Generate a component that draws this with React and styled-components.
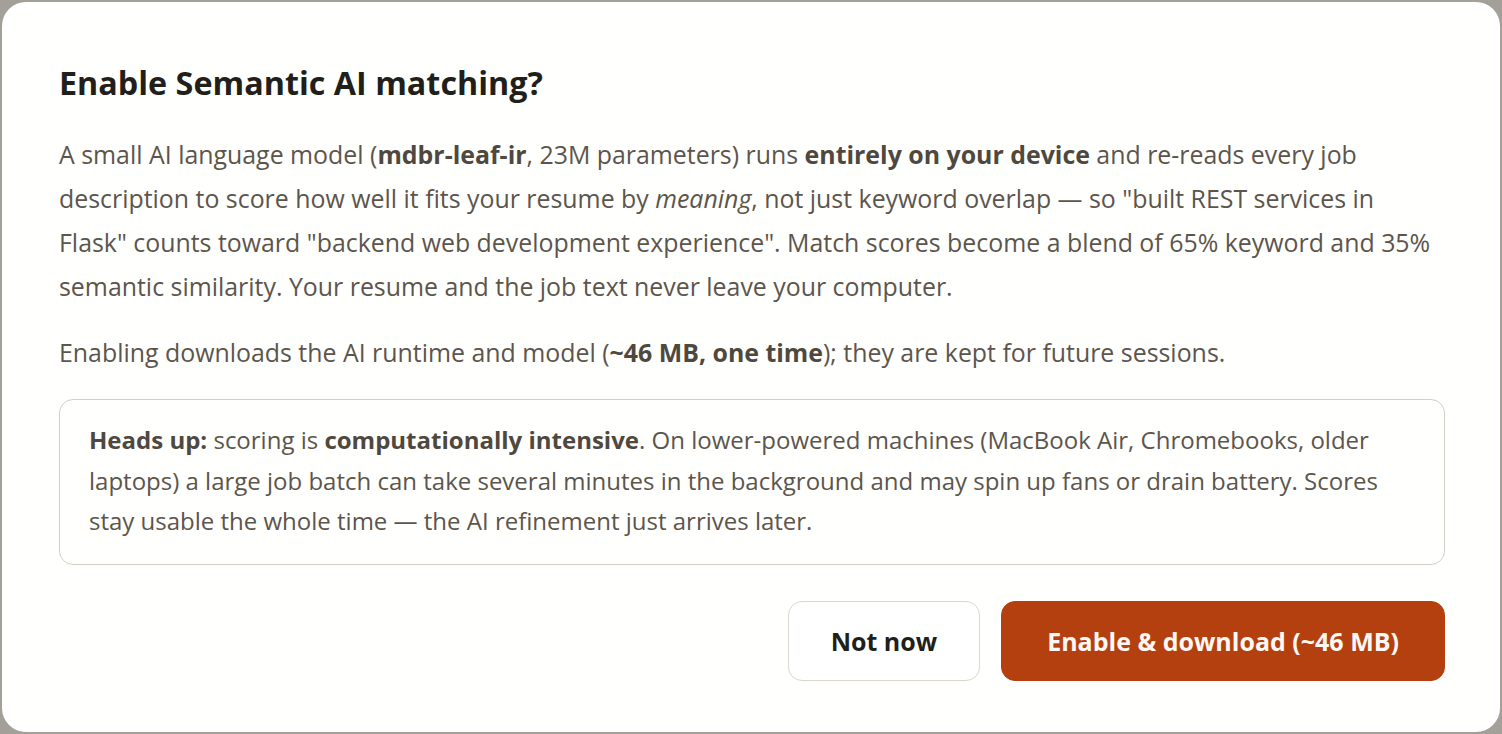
import styled, { createGlobalStyle } from 'styled-components';

const GlobalStyle = createGlobalStyle`
  html, body {
    margin: 0;
    padding: 0;
    background: #a3a099;
  }
  body {
    font-family: 'Open Sans', 'Liberation Sans', sans-serif;
  }
`;

export default function App() {
  return (
    <Overlay>
      <GlobalStyle />
      <Dialog>
        <Title>Enable Semantic AI matching?</Title>
        <Body>
          <Line>A small AI language model (<b>mdbr-leaf-ir</b>, 23M parameters) runs <b>entirely on your device</b> and re-reads every job</Line>
          <Line>description to score how well it fits your resume by <i>meaning</i>, not just keyword overlap — so "built REST services in</Line>
          <Line>Flask" counts toward "backend web development experience". Match scores become a blend of 65% keyword and 35%</Line>
          <Line>semantic similarity. Your resume and the job text never leave your computer.</Line>
        </Body>
        <Body>
          <Line>Enabling downloads the AI runtime and model (<b>~46 MB, one time</b>); they are kept for future sessions.</Line>
        </Body>
        <Callout>
          <Line><b>Heads up:</b> scoring is <b>computationally intensive</b>. On lower-powered machines (MacBook Air, Chromebooks, older</Line>
          <Line>laptops) a large job batch can take several minutes in the background and may spin up fans or drain battery. Scores</Line>
          <Line>stay usable the whole time — the AI refinement just arrives later.</Line>
        </Callout>
        <Actions>
          <Button>Not now</Button>
          <Button $primary>Enable &amp; download (~46 MB)</Button>
        </Actions>
      </Dialog>
    </Overlay>
  );
}

const Overlay = styled.div`
  height: 734px;
  box-sizing: border-box;
  padding: 2px;
  overflow: hidden;
`;

const Dialog = styled.div`
  height: 100%;
  box-sizing: border-box;
  background: #fffffe;
  border-radius: 24px;
  padding: 58px 55px 0 57px;
  display: flex;
  flex-direction: column;
`;

const Title = styled.h2`
  margin: 0 0 28px;
  font-size: 32.3px;
  line-height: 44px;
  font-weight: 700;
  color: #221f1b;
`;

const Body = styled.div`
  margin: 0 0 22px;
  font-size: 24.9px;
  line-height: 44px;
  color: #5c554c;

  b {
    font-weight: 700;
    color: #4f483f;
  }
  i {
    font-style: italic;
  }
`;

const Line = styled.span`
  display: block;
  white-space: nowrap;
`;

const Callout = styled.div`
  margin-top: 3px;
  border: 1.5px solid #d3cfc3;
  border-radius: 14px;
  padding: 20px 29px 22px;
  font-size: 24px;
  line-height: 40.5px;
  color: #5c554c;

  b {
    font-weight: 700;
    color: #4f483f;
  }
`;

const Actions = styled.div`
  display: flex;
  justify-content: flex-end;
  gap: 21px;
  margin-top: 36px;
`;

const Button = styled.button`
  height: 80px;
  padding: 0 ${(p) => (p.$primary ? '45px' : '42px')};
  border-radius: 14px;
  font-family: inherit;
  font-size: 25px;
  font-weight: 700;
  cursor: pointer;
  border: 1.5px solid ${(p) => (p.$primary ? '#b5400f' : '#dbd7cc')};
  background: ${(p) => (p.$primary ? '#b5400f' : '#ffffff')};
  color: ${(p) => (p.$primary ? '#fdf8f4' : '#221f1b')};
`;
